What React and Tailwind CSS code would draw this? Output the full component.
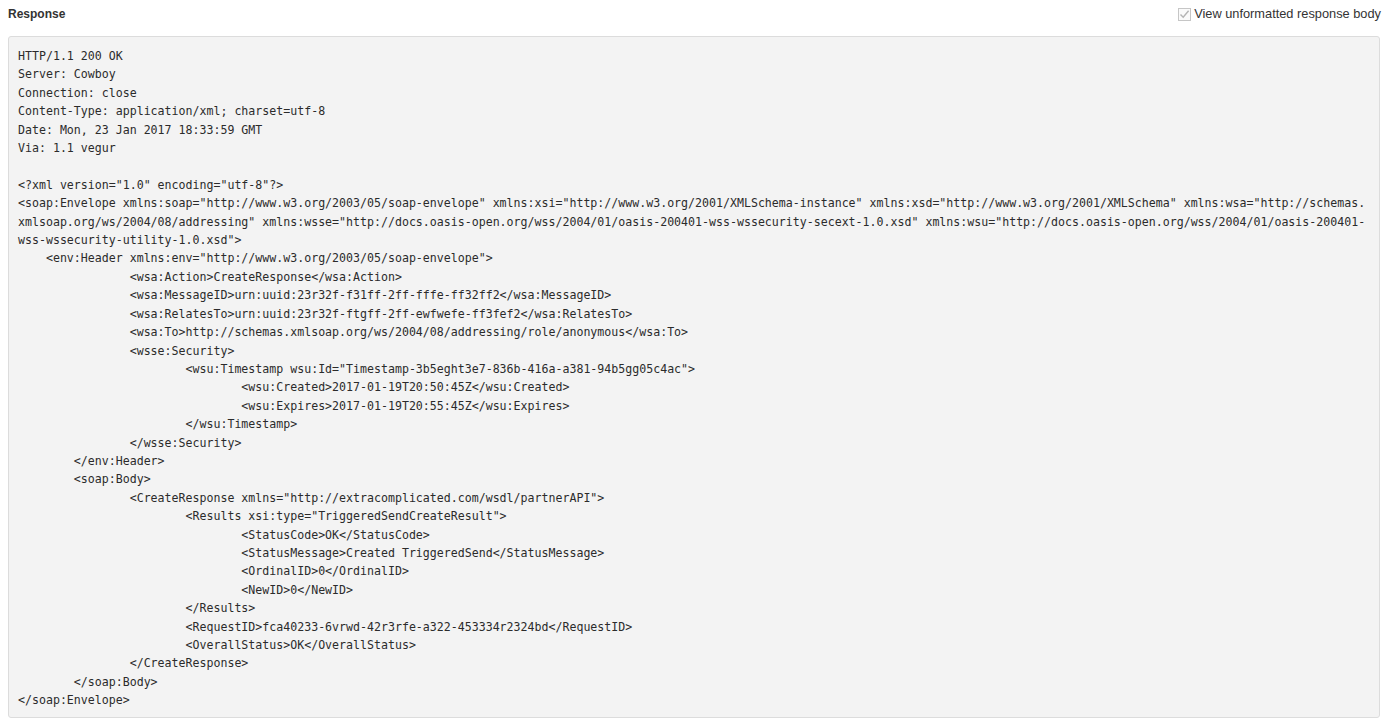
import React from "react";

const lines = [
  [0, "HTTP/1.1 200 OK"],
  [0, "Server: Cowboy"],
  [0, "Connection: close"],
  [0, "Content-Type: application/xml; charset=utf-8"],
  [0, "Date: Mon, 23 Jan 2017 18:33:59 GMT"],
  [0, "Via: 1.1 vegur"],
  [0, ""],
  [0, '<?xml version="1.0" encoding="utf-8"?>'],
  [0, '<soap:Envelope xmlns:soap="http://www.w3.org/2003/05/soap-envelope" xmlns:xsi="http://www.w3.org/2001/XMLSchema-instance" xmlns:xsd="http://www.w3.org/2001/XMLSchema" xmlns:wsa="http://schemas.'],
  [0, 'xmlsoap.org/ws/2004/08/addressing" xmlns:wsse="http://docs.oasis-open.org/wss/2004/01/oasis-200401-wss-wssecurity-secext-1.0.xsd" xmlns:wsu="http://docs.oasis-open.org/wss/2004/01/oasis-200401-'],
  [0, 'wss-wssecurity-utility-1.0.xsd">'],
  [4, '<env:Header xmlns:env="http://www.w3.org/2003/05/soap-envelope">'],
  [16, "<wsa:Action>CreateResponse</wsa:Action>"],
  [16, "<wsa:MessageID>urn:uuid:23r32f-f31ff-2ff-fffe-ff32ff2</wsa:MessageID>"],
  [16, "<wsa:RelatesTo>urn:uuid:23r32f-ftgff-2ff-ewfwefe-ff3fef2</wsa:RelatesTo>"],
  [16, "<wsa:To>http://schemas.xmlsoap.org/ws/2004/08/addressing/role/anonymous</wsa:To>"],
  [16, "<wsse:Security>"],
  [24, '<wsu:Timestamp wsu:Id="Timestamp-3b5eght3e7-836b-416a-a381-94b5gg05c4ac">'],
  [32, "<wsu:Created>2017-01-19T20:50:45Z</wsu:Created>"],
  [32, "<wsu:Expires>2017-01-19T20:55:45Z</wsu:Expires>"],
  [24, "</wsu:Timestamp>"],
  [16, "</wsse:Security>"],
  [8, "</env:Header>"],
  [8, "<soap:Body>"],
  [16, '<CreateResponse xmlns="http://extracomplicated.com/wsdl/partnerAPI">'],
  [24, '<Results xsi:type="TriggeredSendCreateResult">'],
  [32, "<StatusCode>OK</StatusCode>"],
  [32, "<StatusMessage>Created TriggeredSend</StatusMessage>"],
  [32, "<OrdinalID>0</OrdinalID>"],
  [32, "<NewID>0</NewID>"],
  [24, "</Results>"],
  [24, "<RequestID>fca40233-6vrwd-42r3rfe-a322-453334r2324bd</RequestID>"],
  [24, "<OverallStatus>OK</OverallStatus>"],
  [16, "</CreateResponse>"],
  [8, "</soap:Body>"],
  [0, "</soap:Envelope>"],
];

function CheckBox() {
  return (
    <span className="flex h-[13px] w-[13px] items-center justify-center border border-[#c6c6c6] bg-[#fafafa]">
      <svg width="11" height="11" viewBox="0 0 11 11" fill="none">
        <path d="M1.5 5.5 L4.2 8.3 L9.6 1.8" stroke="#b4b4b4" strokeWidth="1.4" />
      </svg>
    </span>
  );
}

export default function App() {
  const body = lines.map(([n, t]) => " ".repeat(n) + t).join("\n");

  return (
    <div className="h-[720px] w-[1382px] overflow-hidden bg-white pl-2 pr-[2px] text-[#333]">
      {/* Header row */}
      <div className="flex h-[28px] items-center justify-between">
        <span className="font-['Liberation_Sans',Arial,sans-serif] text-[12px] font-bold text-[#333]">
          Response
        </span>
        <label className="-mr-[1px] flex items-center gap-[3px] font-['Liberation_Sans',Arial,sans-serif] text-[12.8px] text-[#333]">
          <CheckBox />
          View unformatted response body
        </label>
      </div>

      {/* Raw response */}
      <pre className="mt-[8px] whitespace-pre rounded-[3px] border border-[#dcdcdc] bg-[#f3f3f3] px-[9px] pt-[10px] pb-[7px] font-['DejaVu_Sans_Mono','Liberation_Mono',monospace] text-[11.6px] leading-[18.4px] text-[#2b2b2b]">
        {body}
      </pre>
    </div>
  );
}
